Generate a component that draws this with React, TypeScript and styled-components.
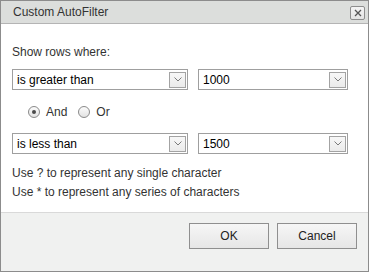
import React from 'react';
import styled, { createGlobalStyle } from 'styled-components';

const GlobalStyle = createGlobalStyle`
  body {
    margin: 0;
    background: #ffffff;
    font-family: "Liberation Sans", Arial, sans-serif;
  }
`;

const Dialog = styled.div`
  width: 369px;
  height: 272px;
  box-sizing: border-box;
  border: 1px solid #8c8c8c;
  display: flex;
  flex-direction: column;
  background: #ffffff;
  font-size: 12px;
  color: #333333;
`;

const Header = styled.div`
  height: 22px;
  border-bottom: 1px solid #b4b4b4;
  background: #dcdedc;
  display: flex;
  align-items: center;
  justify-content: space-between;
  padding: 0 3px 0 12px;
`;

const Title = styled.span`
  font-size: 12px;
  color: #333333;
`;

const CloseButton = styled.button`
  width: 15px;
  height: 14px;
  padding: 0;
  margin-top: 1px;
  border: 1px solid #8e8e8e;
  border-radius: 2px;
  background: linear-gradient(#f4f4f4, #e4e4e4);
  display: flex;
  align-items: center;
  justify-content: center;
`;

const Body = styled.div`
  flex: 1;
  padding: 20px 11px 0 11px;
`;

const Label = styled.div`
  line-height: 16px;
  margin-bottom: 9px;
`;

const Row = styled.div`
  display: flex;
  gap: 10px;
`;

const Select = styled.div<{ $width: number }>`
  width: ${(p) => p.$width}px;
  height: 21px;
  box-sizing: border-box;
  border: 1px solid #9f9f9f;
  display: flex;
  align-items: center;
  justify-content: space-between;
  padding: 0 1px 0 4px;
  color: #000000;
  background: #ffffff;
`;

const DropButton = styled.span`
  width: 17px;
  height: 16px;
  box-sizing: border-box;
  border: 1px solid #a3a3a3;
  background: linear-gradient(#f7f7f7, #ebebeb);
  display: flex;
  align-items: center;
  justify-content: center;
`;

const RadioRow = styled.div`
  display: flex;
  align-items: center;
  height: 21px;
  margin: 11px 0 11px 16px;
`;

const RadioOption = styled.label`
  display: flex;
  align-items: center;
  gap: 6px;
  margin-right: 11px;
`;

const RadioCircle = styled.span<{ $checked?: boolean }>`
  width: 12px;
  height: 12px;
  box-sizing: border-box;
  border-radius: 50%;
  border: 1px solid #8a8a8a;
  background: linear-gradient(#fbfbfb, #e2e2e2);
  display: flex;
  align-items: center;
  justify-content: center;

  &::after {
    content: '';
    width: 4px;
    height: 4px;
    border-radius: 50%;
    background: ${(p) => (p.$checked ? '#4a4a4a' : 'transparent')};
  }
`;

const Hints = styled.div`
  margin-top: 10px;
  line-height: 19px;
`;

const Footer = styled.div`
  height: 48px;
  border-top: 1px solid #d9d9d9;
  background: #f0f1f0;
  display: flex;
  justify-content: flex-end;
  align-items: flex-start;
  gap: 8px;
  padding: 10px 11px 0 0;
`;

const Button = styled.button`
  width: 80px;
  height: 26px;
  border: 1px solid #8f8f8f;
  background: linear-gradient(#f6f6f6, #e6e6e6);
  font-family: "Liberation Sans", Arial, sans-serif;
  font-size: 12px;
  color: #222222;
  padding: 0;
`;

const Chevron = () => (
  <svg width="8" height="5" viewBox="0 0 8 5">
    <path d="M0.5 0.5 L4 4 L7.5 0.5" fill="none" stroke="#7a7a7a" strokeWidth="1" />
  </svg>
);

const Cross = () => (
  <svg width="8" height="8" viewBox="0 0 8 8">
    <path d="M1 1 L7 7 M7 1 L1 7" fill="none" stroke="#555" strokeWidth="1.3" />
  </svg>
);

const Dropdown: React.FC<{ value: string; width: number }> = ({ value, width }) => (
  <Select $width={width}>
    <span>{value}</span>
    <DropButton>
      <Chevron />
    </DropButton>
  </Select>
);

const App: React.FC = () => {
  return (
    <>
      <GlobalStyle />
      <Dialog>
        <Header>
          <Title>Custom AutoFilter</Title>
          <CloseButton aria-label="Close">
            <Cross />
          </CloseButton>
        </Header>
        <Body>
          <Label>Show rows where:</Label>
          <Row>
            <Dropdown value="is greater than" width={176} />
            <Dropdown value="1000" width={150} />
          </Row>
          <RadioRow>
            <RadioOption>
              <RadioCircle $checked />
              And
            </RadioOption>
            <RadioOption>
              <RadioCircle />
              Or
            </RadioOption>
          </RadioRow>
          <Row>
            <Dropdown value="is less than" width={176} />
            <Dropdown value="1500" width={150} />
          </Row>
          <Hints>
            <div>Use ? to represent any single character</div>
            <div>Use * to represent any series of characters</div>
          </Hints>
        </Body>
        <Footer>
          <Button>OK</Button>
          <Button>Cancel</Button>
        </Footer>
      </Dialog>
    </>
  );
};

export default App;
